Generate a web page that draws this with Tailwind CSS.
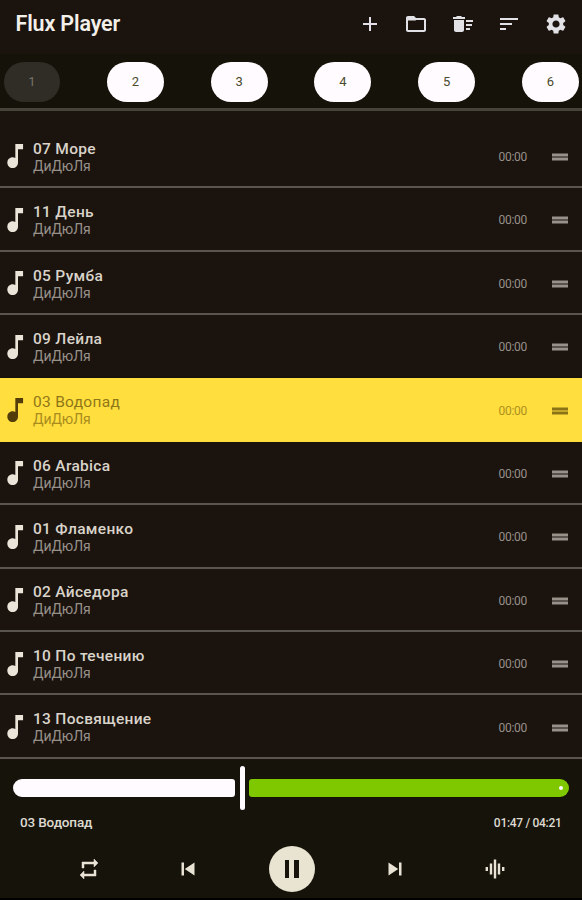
<!DOCTYPE html>
<html lang="ru">
<head>
<meta charset="utf-8">
<title>Flux Player</title>
<script src="https://cdn.jsdelivr.net/npm/@tailwindcss/browser@4"></script>
</head>
<body class="bg-black">
<div class="w-[582px] h-[900px] overflow-hidden flex flex-col bg-[#17130c] font-['Roboto',sans-serif] border-b-2 border-black">
  <header class="h-[54px] shrink-0 flex items-center justify-between pl-[15.5px] pr-[14px] pb-[6px] bg-[#1b130e]">
    <h1 class="text-[21.5px] leading-6 tracking-[-0.15px] font-semibold text-[#f3efe9]">Flux Player</h1>
    <div class="flex gap-[22.6px] text-[#e2e1e6]">
      <svg class="size-6" viewBox="0 0 24 24" fill="currentColor"><path d="M19 13h-6v6h-2v-6H5v-2h6V5h2v6h6z"/></svg>
      <svg class="size-6" viewBox="0 0 24 24" fill="currentColor"><path d="M9.17 6l2 2H20v10H4V6h5.17M10 4H4c-1.1 0-1.99.9-1.99 2L2 18c0 1.1.9 2 2 2h16c1.1 0 2-.9 2-2V8c0-1.1-.9-2-2-2h-8l-2-2z"/><path d="M4 6h6l2 2.500H4z"/></svg>
      <svg class="size-6" viewBox="0 0 24 24" fill="currentColor"><path d="M15 16h4v2h-4zm0-8h7v2h-7zm0 4h6v2h-6zM3 18c0 1.1.9 2 2 2h6c1.1 0 2-.9 2-2V8H3v10zM14 5h-3l-1-1H6L5 5H2v2h12z"/></svg>
      <svg class="size-6" viewBox="0 0 24 24" fill="currentColor"><path d="M3 18h6v-2H3v2zM3 6v2h18V6H3zm0 7h12v-2H3v2z"/></svg>
      <svg class="size-6" viewBox="0 0 24 24" fill="currentColor"><path d="M19.14 12.94c.04-.3.06-.61.06-.94 0-.32-.02-.64-.07-.94l2.03-1.58c.18-.14.23-.41.12-.61l-1.92-3.32c-.12-.22-.37-.29-.59-.22l-2.39.96c-.5-.38-1.03-.7-1.62-.94l-.36-2.54c-.04-.24-.24-.41-.48-.41h-3.84c-.24 0-.43.17-.47.41l-.36 2.54c-.59.24-1.13.57-1.62.94l-2.39-.96c-.22-.08-.47 0-.59.22L2.74 8.87c-.12.21-.08.47.12.61l2.03 1.58c-.05.3-.09.63-.09.94s.02.64.07.94l-2.03 1.58c-.18.14-.23.41-.12.61l1.92 3.32c.12.22.37.29.59.22l2.39-.96c.5.38 1.03.7 1.62.94l.36 2.54c.05.24.24.41.48.41h3.84c.24 0 .44-.17.47-.41l.36-2.54c.59-.24 1.13-.56 1.62-.94l2.39.96c.22.08.47 0 .59-.22l1.92-3.32c.12-.22.07-.47-.12-.61l-2.01-1.58zM12 15.6c-1.98 0-3.6-1.62-3.6-3.6s1.62-3.6 3.6-3.6 3.6 1.62 3.6 3.6-1.62 3.6-3.6 3.6z"/></svg>
    </div>
  </header>
  <nav class="h-[57px] shrink-0 flex items-start justify-between pt-2 pl-1 pr-[3px] bg-[#15120a] border-b-3 border-[#47433b] text-[13px] text-[#4a4a2c]">
    <button class="w-[56px] h-10 rounded-full bg-[#302c26] text-[#77736c]">1</button>
    <button class="w-[57px] h-10 rounded-full bg-[#fffbff]">2</button>
    <button class="w-[57px] h-10 rounded-full bg-[#fffbff]">3</button>
    <button class="w-[57px] h-10 rounded-full bg-[#fffbff]">4</button>
    <button class="w-[57px] h-10 rounded-full bg-[#fffbff]">5</button>
    <button class="w-[57px] h-10 rounded-full bg-[#fffbff]">6</button>
  </nav>
  <main id="list" class="pt-[13.8px] h-[648.5px] shrink-0 flex flex-col bg-[#1b130e]"></main>
  <footer class="grow flex flex-col bg-[#16130b]">
    <div class="h-[44px] mt-[6.500px] pl-[13px] pr-[13px] flex items-center gap-[4.500px]">
      <div class="w-[222px] h-[18px] rounded-l-[9px] rounded-r-[3px] bg-[#fffbff]"></div>
      <div class="w-[5px] h-[44px] rounded-full bg-[#fffbff]"></div>
      <div class="grow h-[18px] rounded-r-[9px] rounded-l-[3px] bg-[#7fc800] flex items-center justify-end pr-[6px]"><div class="size-1 rounded-full bg-[#fffbff]"></div></div>
    </div>
    <div class="h-[24px] pl-5 pr-[20.5px] flex items-center justify-between text-[#dedad0]">
      <span class="text-[13.500px] font-medium tracking-[-0.15px]">03 Водопад</span>
      <span class="text-[12px] font-medium tracking-[-0.3px] pt-px">01:47 / 04:21</span>
    </div>
    <div class="h-[69px] pl-[77px] pr-[75px] flex items-center justify-between text-[#e9e3d6]">
      <svg class="size-6" viewBox="0 0 24 24" fill="currentColor" stroke="currentColor" stroke-width=".5"><path d="M7 7h10v3l4-4-4-4v3H5v6h2V7zm10 10H7v-3l-4 4 4 4v-3h12v-6h-2v4z"/></svg>
      <svg class="size-[26px] ml-[7px]" viewBox="0 0 24 24" fill="currentColor"><path d="M6 6h2.300v12H6zm3 6l9 6V6z"/></svg>
      <div class="size-[46px] rounded-full bg-[#e9e3d1] flex items-center justify-center gap-[5px]">
        <div class="w-[4.5px] h-[18px] bg-[#17140c]"></div>
        <div class="w-[4.5px] h-[18px] bg-[#17140c]"></div>
      </div>
      <svg class="size-[26px] mr-[8px]" viewBox="0 0 24 24" fill="currentColor"><path d="M6 18l9-6-9-6v12zM15.700 6v12H18V6z"/></svg>
      <svg class="size-6" viewBox="0 0 24 24" stroke="currentColor" stroke-width="2.400" fill="none"><path d="M3.800 10v4M8 6.500v11M12 2.500v19M16 6.500v11M20.200 10v4"/></svg>
    </div>
  </footer>
</div>
<script>
const tracks = ["07 Море","11 День","05 Румба","09 Лейла","03 Водопад","06 Arabica","01 Фламенко","02 Айседора","10 По течению","13 Посвящение"];
const current = 4;
document.getElementById("list").innerHTML = tracks.map((title, i) => {
  const on = i === current;
  return `<div class="h-[63.4px] shrink-0 flex items-center border-b-2 ${on ? "bg-[#ffde3d] border-[#ffde3d]" : i === current - 1 ? "border-[#17130c]" : "border-[#59554e]"}">
    <svg class="size-8 shrink-0 -ml-[0.5px] mt-[2px] ${on ? "text-[#513c0a]" : "text-[#ebe5d9]"}" viewBox="0 0 24 24" fill="currentColor"><path d="M11.500 3v10.550c-.59-.34-1.270-.55-2-.55-2.210 0-4 1.790-4 4s1.790 4 4 4 4-1.790 4-4V7h3.800V3h-5.800z"/></svg>
    <div class="grow ml-[1.500px] pt-[3.500px]">
      <div class="text-[15.500px] leading-[17px] tracking-[0.3px] ${on ? "text-[#8f7718]" : "font-medium text-[#d9d3ca]"}">${title}</div>
      <div class="text-[14px] leading-[16px] tracking-[-0.1px] ${on ? "text-[#a88c1e]" : "text-[#97918a]"}">ДиДюЛя</div>
    </div>
    <div class="text-[12px] tracking-[-0.3px] mt-[3px] mr-[20.500px] ${on ? "text-[#ad9020]" : "text-[#97918a]"}">00:00</div>
    <svg class="size-6 mt-[3px] mr-[10.500px] ${on ? "text-[#8a7216]" : "text-[#97918a]"}" viewBox="0 0 24 24" fill="currentColor"><path d="M20 8.500H4v3h16v-3zM4 15.500h16v-3H4v3z"/></svg>
  </div>`;
}).join("");
</script>
</body>
</html>
